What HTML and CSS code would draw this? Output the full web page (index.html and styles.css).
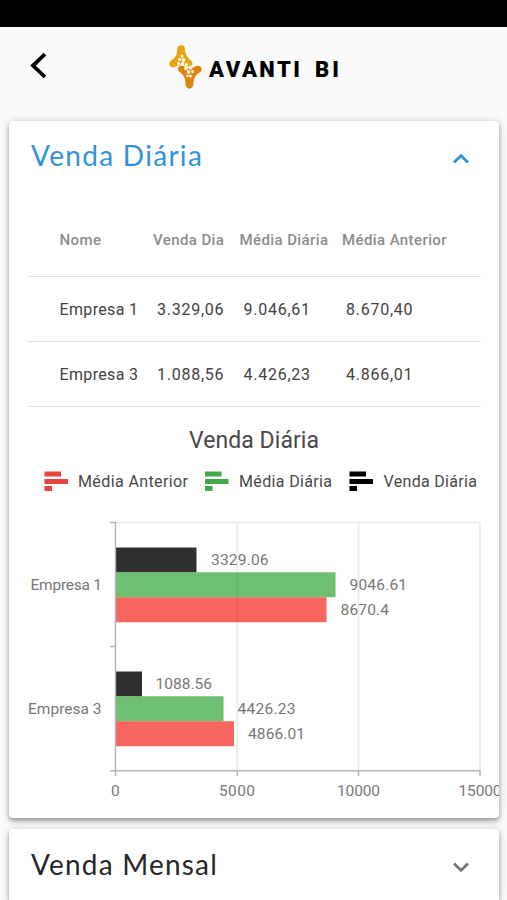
FILE: index.html
```html
<!DOCTYPE html>
<html lang="pt-BR">
<head>
<meta charset="utf-8">
<title>Avanti BI</title>
<link rel="stylesheet" href="styles.css">
</head>
<body>
<div class="status"></div>
<header class="bar">
  <svg class="back" width="18" height="28" viewBox="0 0 18 28"><path d="M16 2.200 4 13.500l12 11.500" fill="none" stroke="#000" stroke-width="3.800"/></svg>
  <svg class="logo" width="176" height="48" viewBox="0 0 176 48">
    <path d="M11.300 6.500C11.300 2.200 18.900 2.200 18.900 6.500C19 12 21.500 16 25 18.500C28.500 22 25 26 21.500 24.500C17 22.500 13 22 8.500 25C4.500 26.500 1.500 22 4.500 19C9 16.500 11.500 12 11.300 6.500Z" fill="#e9a410"/>
    <path d="M13 24.500C15 22.500 17 23.500 19 25C22 26.500 25.500 26.500 30 24C34.500 22.500 37.500 27 34.500 30C29.500 32.500 27.500 36.500 27.400 42.500C27.400 48 19.600 48 19.600 42.500C19.500 37 18 33 13.500 30C11.500 28.500 11.500 26 13 24.500Z" fill="#dc8610"/>
    <g fill="#fff9ea"><circle cx="16" cy="14" r="1.500"/><circle cx="13.500" cy="17.500" r="1.600"/><circle cx="17.500" cy="18" r="1.900"/><circle cx="12.500" cy="21.500" r="1.400"/><circle cx="16.500" cy="22" r="2.100"/><circle cx="20.500" cy="22.500" r="1.400"/><circle cx="20" cy="26.500" r="1.800"/><circle cx="24.500" cy="25.500" r="2"/><circle cx="22.500" cy="30" r="1.900"/><circle cx="26.500" cy="29.500" r="1.500"/><circle cx="21.500" cy="34" r="1.200"/><circle cx="24.500" cy="34" r="1.500"/></g>
    <text class="brand" x="43" y="35" textLength="91">AVANTI</text>
    <text class="brand" x="149" y="35" textLength="24">BI</text>
  </svg>
</header>
<main class="list">
  <section class="card open">
    <div class="head"><h2 class="title active">Venda Diária</h2>
      <svg class="chev" width="18" height="12" viewBox="0 0 18 12"><path d="m2 9.500 7-7 7 7" fill="none" stroke="#2d8bd8" stroke-width="2.600"/></svg></div>
    <div class="table">
      <div class="row th"><span>Nome</span><span>Venda Dia</span><span>Média Diária</span><span>Média Anterior</span></div>
      <div class="row"><span>Empresa 1</span><span class="num">3.329,06</span><span class="num">9.046,61</span><span class="num">8.670,40</span></div>
      <div class="row"><span>Empresa 3</span><span class="num">1.088,56</span><span class="num">4.426,23</span><span class="num">4.866,01</span></div>
    </div>
    <svg class="chart" width="491" height="410" viewBox="9 407 491 410">
      <text class="ct" x="189" y="448" textLength="130">Venda Diária</text>
      <g fill="#e5453e"><path d="M44.500 471.500h16.500v5h-16.500zM44.500 479h23.500v5h-23.500zM44.500 486h7.500v5h-7.500z"/></g>
      <g fill="#43a849"><path d="M205 471.500h16.500v5h-16.500zM205 479h23.500v5h-23.500zM205 486h7.500v5h-7.500z"/></g>
      <g fill="#000"><path d="M349.500 471.500h16.500v5h-16.500zM349.500 479h23.500v5h-23.500zM349.500 486h7.500v5h-7.500z"/></g>
      <g class="lg">
        <text x="78" y="487" textLength="110">Média Anterior</text>
        <text x="239" y="487" textLength="93">Média Diária</text>
        <text x="383.500" y="487" textLength="93.500">Venda Diária</text>
      </g>
      <path d="M115 522.500h365.500M237.300 522V771M358.500 522V771M480 522V771" fill="none" stroke="#e9e9e9" stroke-width="1.600"/>
      <g fill="#303030"><path d="M115.500 547.500h81v25h-81zM115.500 671.500h26.500v25h-26.500z"/></g>
      <g fill="#6fbf72"><path d="M115.500 572.300h220v25h-220zM115.500 696.300h108v25h-108z"/></g>
      <g fill="#f7675f"><path d="M115.500 597.300h211v25h-211zM115.500 721.300h118.500v25h-118.500z"/></g>
      <path d="M237.300 572.300v50" stroke="#000" stroke-opacity=".05" stroke-width="1.600"/>
      <path d="M115.500 522v254M110 522.500h5M110 646.500h5M110 770.800h370.500M237.300 771v5M358.500 771v5M480 771v5" fill="none" stroke="#b3b3b3" stroke-width="1.400"/>
      <g class="lb">
        <text x="30.500" y="590" textLength="71.500">Empresa 1</text>
        <text x="28" y="714" textLength="73.500">Empresa 3</text>
        <text x="211" y="565" textLength="57.500">3329.06</text>
        <text x="349.500" y="590" textLength="57.500">9046.61</text>
        <text x="340.500" y="615" textLength="48.500">8670.4</text>
        <text x="155.500" y="689" textLength="56.500">1088.56</text>
        <text x="237.500" y="714" textLength="58">4426.23</text>
        <text x="248" y="739" textLength="57">4866.01</text>
        <text x="111" y="796.300">0</text>
        <text x="219" y="796.300" textLength="36">5000</text>
        <text x="337" y="796.300" textLength="43">10000</text>
        <text x="458.500" y="796.300" textLength="43">15000</text>
      </g>
    </svg>
  </section>
  <section class="card last">
    <div class="head"><h2 class="title">Venda Mensal</h2>
      <svg class="chev" width="18" height="12" viewBox="0 0 18 12"><path d="m2 2.500 7 7 7-7" fill="none" stroke="#707070" stroke-width="2.600"/></svg></div>
  </section>
</main>
</body>
</html>
```
FILE: styles.css
```css
* { box-sizing: border-box; }
body { margin: 0; height: 900px; overflow: hidden; background: #fafafa; font-family: Roboto, sans-serif; }
.status { height: 27px; background: #000; }
.bar { height: 94px; display: flex; align-items: flex-start; padding: 15px 0 0 29px; }
.back { margin-top: 10px; }
.logo { margin-left: 119px; }
.brand { font: 900 22px Roboto, sans-serif; fill: #000; }
.list { padding: 0 8px 0 9px; display: flex; flex-direction: column; gap: 11px; }
.card { height: 71px; flex: none; background: #fff; border-radius: 4px; box-shadow: 0 3px 4px rgba(0,0,0,.28), 0 1px 8px rgba(0,0,0,.2); overflow: hidden; }
.card.open { height: 697px; }
.card.last { border-radius: 4px 4px 0 0; }
.head { height: 73px; display: flex; justify-content: space-between; align-items: center; padding: 0 29px 0 22px; }
.title { margin: 0 0 3px; font: 400 28px Lato, sans-serif; letter-spacing: 1.2px; color: #262626; }
.title.active { margin-bottom: 5px; letter-spacing: 1.3px; color: #3192dc; }
.chev { margin-top: 3px; }
.table { margin: 0 18px; }
.row { height: 65px; display: grid; grid-template-columns: 97.5px 86.5px 102.5px 1fr; align-items: center; padding-left: 32.5px; border-bottom: 1px solid #e0e0e0; font-size: 16px; letter-spacing: .35px; color: #424242; white-space: nowrap; }
.num { letter-spacing: .75px; }
.row.th { height: 83px; grid-template-columns: 93.5px 86.5px 102.5px 1fr; padding-top: 9px; font-size: 15px; font-weight: 500; color: #8c8c8c; letter-spacing: .4px; }
.chart { display: block; }
.ct { font-size: 23px; fill: #484848; }
.lg { font-size: 16px; fill: #484848; }
.lb { font-size: 15.5px; fill: #777; }
```
